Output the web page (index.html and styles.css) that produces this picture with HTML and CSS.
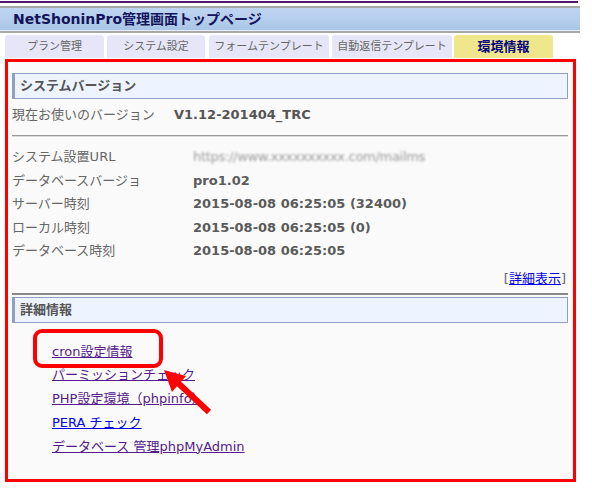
FILE: index.html
```html
<!DOCTYPE html>
<html lang="ja">
<head>
<meta charset="utf-8">
<title>NetShoninPro管理画面トップページ</title>
<link rel="stylesheet" href="styles.css">
</head>
<body>
<div class="page">
  <div class="topline"></div>
  <div class="header">
    <div class="titlebar">NetShoninPro管理画面トップページ</div>
  </div>
  <ul class="tabs">
    <li class="tab t1">プラン管理</li>
    <li class="tab t2">システム設定</li>
    <li class="tab t3">フォームテンプレート</li>
    <li class="tab t4">自動返信テンプレート</li>
    <li class="tab t5 active">環境情報</li>
  </ul>
  <div class="panel">
    <div class="sechead">システムバージョン</div>
    <div class="version"><span class="vlabel">現在お使いのバージョン</span><span class="vval">V1.12-201404_TRC</span></div>
    <div class="rule"></div>
    <div class="rows">
      <div class="row"><span class="label">システム設置URL</span><span class="val blur">https://www.xxxxxxxxxx.com/mailms</span></div>
      <div class="row"><span class="label">データベースバージョ</span><span class="val">pro1.02</span></div>
      <div class="row"><span class="label">サーバー時刻</span><span class="val">2015-08-08 06:25:05 (32400)</span></div>
      <div class="row"><span class="label">ローカル時刻</span><span class="val">2015-08-08 06:25:05 (0)</span></div>
      <div class="row"><span class="label">データベース時刻</span><span class="val">2015-08-08 06:25:05</span></div>
    </div>
    <div class="more">[<a href="#" class="lnk">詳細表示</a>]</div>
    <div class="rule2"></div>
    <div class="sechead">詳細情報</div>
    <ul class="links">
      <li><a href="#" class="visited">cron設定情報</a></li>
      <li><a href="#" class="visited">パーミッションチェック</a></li>
      <li><a href="#" class="visited">PHP設定環境（phpinfo）</a></li>
      <li><a href="#" class="lnk">PERA チェック</a></li>
      <li><a href="#" class="visited">データベース 管理phpMyAdmin</a></li>
    </ul>
    <div class="highlight"></div>
  </div>
  <svg class="arrow" width="592" height="489" viewBox="0 0 592 489">
    <line x1="178" y1="382" x2="209" y2="411" stroke="#ff0000" stroke-width="6"/>
    <polygon points="164,369 186,375 172,391" fill="#ff0000"/>
  </svg>
</div>
</body>
</html>
```
FILE: styles.css
```css
*, *::before, *::after {
  box-sizing: border-box;
}
html, body {
  margin: 0;
  padding: 0;
  background: #ffffff;
}
body {
  font-family: "DejaVu Sans", "Noto Sans CJK JP", sans-serif;
  font-size: 13px;
  color: #555555;
}
.page {
  position: relative;
  width: 592px;
  height: 489px;
}
.topline {
  margin-top: 1px;
  width: 578px;
  height: 2px;
  background: #4e1a6e;
}
.header {
  margin-top: 3px;
  width: 580px;
  border-top: 2px solid #a8a8a8;
  border-bottom: 2px solid #a8a8a8;
}
.titlebar {
  height: 23px;
  line-height: 22px;
  padding-left: 13px;
  background: linear-gradient(#bed5f2, #b4cdec 60%, #a9c4e6);
  color: #14145a;
  font-weight: bold;
  font-size: 14px;
  border-bottom: 1px solid #e6eef8;
}
.tabs {
  list-style: none;
  margin: 2px 0 0 5px;
  padding: 0;
  display: flex;
  gap: 3px;
  height: 23px;
}
.tab {
  height: 23px;
  line-height: 24px;
  text-align: center;
  background: #e6e6f8;
  border-radius: 3px 3px 0 0;
  color: #666666;
  font-size: 11px;
}
.t1 { width: 99px; }
.t2 { width: 98px; }
.t3 { width: 120px; margin-left: 1px; }
.t4 { width: 120px; }
.t5 { width: 99px; margin-left: -1px; }
.tab.active {
  background: #f0e68c;
  color: #000080;
  font-weight: bold;
  font-size: 13px;
}
.panel {
  position: relative;
  margin: 1px 0 0 5px;
  width: 571px;
  height: 423px;
  border: 3px solid #ff0000;
  background: #fafafa;
  padding: 11px 5px 0 4px;
}
.sechead {
  height: 26px;
  line-height: 24px;
  border: 1px solid #8ea0bf;
  border-left: 3px solid #8ea0bf;
  background: #eef4ff;
  padding-left: 5px;
  font-weight: bold;
  color: #555555;
}
.version {
  height: 32px;
  line-height: 32px;
  display: flex;
}
.vlabel {
  color: #666666;
  width: 162px;
}
.vval {
  font-weight: bold;
  color: #555555;
}
.rule {
  margin-top: 4px;
  height: 2px;
  background: #999999;
  border-bottom: 1px solid #dddddd;
}
.rows {
  margin-top: 8px;
}
.row {
  display: flex;
  height: 23.5px;
  line-height: 23.5px;
}
.label {
  width: 181px;
  color: #666666;
}
.val {
  color: #5a5a5a;
  font-weight: bold;
}
.val.blur {
  font-weight: normal;
  color: #9a9a9a;
  filter: blur(1.2px);
  letter-spacing: -0.3px;
}
.more {
  margin-top: 5px;
  text-align: right;
  padding-right: 2px;
  height: 22px;
  line-height: 22px;
  color: #666666;
}
.lnk {
  color: #0000ee;
  text-decoration: underline;
}
.rule2 {
  margin-top: 3px;
  height: 2px;
  background: #888888;
  margin-bottom: 2px;
}
.links {
  list-style: none;
  margin: 17px 0 0 40px;
  padding: 0;
}
.links li {
  height: 23.75px;
  line-height: 23.75px;
}
.links a.visited {
  color: #551a8b;
  text-decoration: underline;
}
.highlight {
  position: absolute;
  left: 25px;
  top: 267px;
  width: 130px;
  height: 39px;
  border: 4px solid #ff0000;
  border-radius: 9px;
}
.arrow {
  position: absolute;
  left: 0;
  top: 0;
  pointer-events: none;
}
```
